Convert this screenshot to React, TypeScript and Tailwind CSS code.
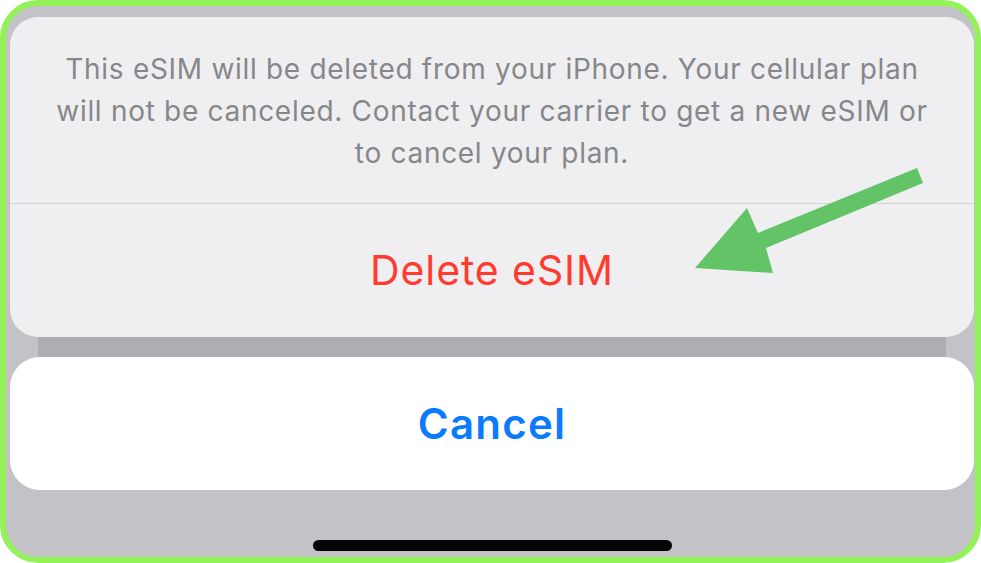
import React from 'react';

export default function App() {
  return (
    <div className="w-[981px] h-[563px] overflow-hidden bg-white">
      <div
        className="relative w-full h-full rounded-[38px] border-[6px] border-[#93f25a] bg-[#c3c2c7] flex flex-col pl-[4px] pr-[1px] pt-[11px]"
        style={{ fontFamily: 'Inter, "Noto Sans", sans-serif' }}
      >
        {/* action sheet */}
        <div className="relative z-10 rounded-[28px] bg-[#efeff1] flex flex-col">
          <div className="h-[186px] flex items-center justify-center px-4 pt-[2px]">
            <p className="text-center text-[28px] leading-[42px] text-[#87878b] tracking-[0.7px] whitespace-nowrap">
              This eSIM will be deleted from your iPhone. Your cellular plan
              <br />
              will not be canceled. Contact your carrier to get a new eSIM or
              <br />
              to cancel your plan.
            </p>
          </div>
          <div className="h-px bg-[#d4d4d7]" />
          <div className="h-[133px] flex items-center justify-center">
            <span className="text-[41px] text-[#ff3b30] leading-none tracking-[0.9px]">Delete eSIM</span>
          </div>
        </div>

        {/* sheet behind */}
        <div className="-mt-[30px] mx-[28px] h-[50px] rounded-t-[34px] bg-[#aeadb2]" />

        {/* cancel */}
        <div className="relative z-10 h-[133px] rounded-[30px] bg-white flex items-center justify-center">
          <span className="text-[42px] font-semibold text-[#0a7aff] leading-none tracking-[1.2px]">Cancel</span>
        </div>

        <div className="flex-1 flex items-end justify-center pb-[6px]">
          <div className="w-[359px] h-[11px] rounded-full bg-[#050505]" />
        </div>

        {/* annotation arrow */}
        <svg className="absolute left-[-6px] top-[-6px] z-20 pointer-events-none" width="981" height="563" viewBox="0 0 981 563">
          <polygon
            points="695,268 747,208 758,233 917,168 923,183 766,248 773,273"
            fill="#63c467"
          />
        </svg>
      </div>
    </div>
  );
}
